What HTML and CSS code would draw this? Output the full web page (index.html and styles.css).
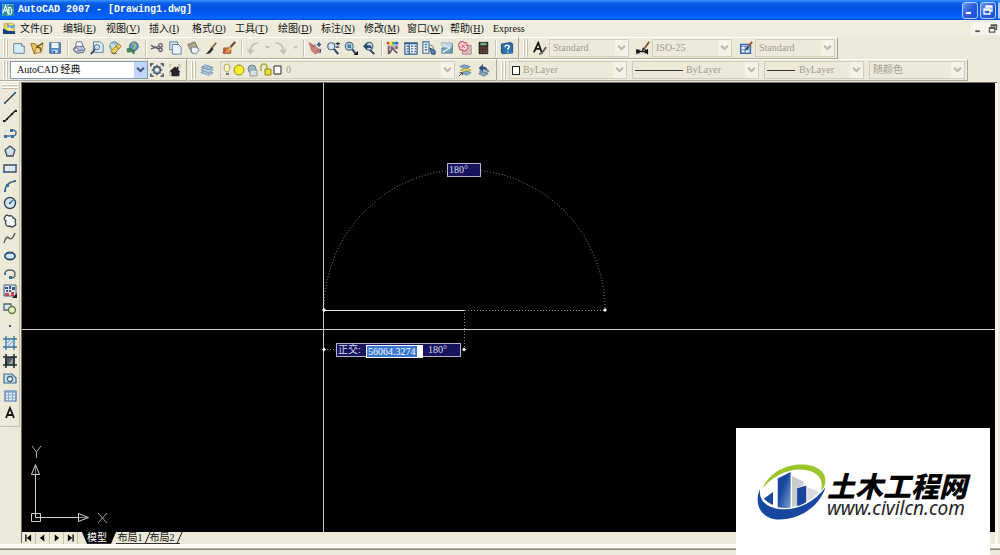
FILE: index.html
```html
<!DOCTYPE html>
<html lang="zh-CN">
<head>
<meta charset="utf-8">
<title>AutoCAD 2007 - [Drawing1.dwg]</title>
<link rel="stylesheet" href="styles.css">
</head>
<body>
<svg class="defs" aria-hidden="true">
  <symbol id="chev" viewBox="0 0 8 6"><path d="M1 1l3 3 3-3" fill="none" stroke="currentColor" stroke-width="1.8"/></symbol>
  <symbol id="restore" viewBox="0 0 10 10"><path d="M3 3V1h6v5H7M3 2h6" fill="none" stroke="currentColor" stroke-width="1.3"/><path d="M1 4h6v5H1zM1 5h6" fill="none" stroke="currentColor" stroke-width="1.3"/></symbol>
</svg>
<header class="titlebar">
  <svg class="app-icon" viewBox="0 0 14 14"><rect width="14" height="14" fill="#2f8d99"/><path d="M0 0h14M0 7h14M0 0v14M7 0v14" stroke="#8fd2d4"/><path d="M1 11L4 2l3 9M2 8h4M8 4v8h2q3-3 0-8z" fill="none" stroke="#fff" stroke-width="1.2"/></svg>
  <h1>AutoCAD 2007 - [Drawing1.dwg]</h1>
  <div class="win-buttons">
    <button aria-label="最小化"><svg viewBox="0 0 10 10"><path d="M1 8h5" stroke="#fff" stroke-width="2.2"/></svg></button>
    <button aria-label="还原"><svg><use href="#restore"/></svg></button>
    <button class="cut-off" aria-label="关闭"></button>
  </div>
</header>
<nav class="menubar">
  <svg class="doc-icon" viewBox="0 0 14 14"><path d="M1 2l8-1 3 2v9H2z" fill="#f5d54a" stroke="#a68a2c" stroke-width=".6"/><path d="M3 1l5 3 5-1v3L6 8z" fill="#6aa9e8"/><path d="M0 13V7l4 2 9 1v3z" fill="#173f86"/><path d="M4 9l3-4 4 5z" fill="#fff1a0"/></svg>
  <button>文件<span>(<u>F</u>)</span></button><button>编辑<span>(<u>E</u>)</span></button><button>视图<span>(<u>V</u>)</span></button><button>插入<span>(<u>I</u>)</span></button><button>格式<span>(<u>O</u>)</span></button><button>工具<span>(<u>T</u>)</span></button><button>绘图<span>(<u>D</u>)</span></button><button>标注<span>(<u>N</u>)</span></button><button>修改<span>(<u>M</u>)</span></button><button>窗口<span>(<u>W</u>)</span></button><button>帮助<span>(<u>H</u>)</span></button><button><span>Express</span></button>
  <div class="doc-buttons">
    <button aria-label="最小化文档"><svg viewBox="0 0 10 10"><path d="M2 8h5" stroke="currentColor" stroke-width="2"/></svg></button>
    <button aria-label="还原文档"><svg><use href="#restore"/></svg></button>
  </div>
</nav>
<div class="toolrow">
  <div class="toolbar" role="toolbar" aria-label="标准">
    <button aria-label="新建"><svg viewBox="0 0 16 16"><path d="M2 3h9l3 3v8H2z" fill="#d9ecf8" stroke="#4b7794"/><path d="M11 3v3h3" fill="#fff" stroke="#4b7794"/></svg></button>
    <button aria-label="打开"><svg viewBox="0 0 16 16"><path d="M1 3h5l1 2h5l-4 8-3 2z" fill="#e7c35b" stroke="#8b6b21"/><path d="M5 14l3-8 7-3-2 10z" fill="#f6df93" stroke="#8b6b21" stroke-width=".8"/><path d="M15 2l-7 5 4 1v4" fill="none" stroke="#795018" stroke-width="1.6"/></svg></button>
    <button aria-label="保存"><svg viewBox="0 0 16 16"><path d="M2 2h12v12H2z" fill="#5b8dc8" stroke="#24528f"/><path d="M4 2h8v6H4z" fill="#eef6fc"/><path d="M5 10h6v4H5z" fill="#c5daf0"/><path d="M6 11h2v3H6z" fill="#24528f"/></svg></button>
    <i class="sep"></i>
    <button aria-label="打印"><svg viewBox="0 0 16 16"><path d="M4 7l1-6h6l2 6" fill="#fff" stroke="#55647c"/><path d="M2 8l4-2h6l3 3-2 4-7 1-4-3z" fill="#b7c2dc" stroke="#4f5c7c"/><circle cx="5" cy="10" r="2" fill="#fff" stroke="#596786"/><path d="M8 11l5-1" stroke="#596786"/></svg></button>
    <button aria-label="打印预览"><svg viewBox="0 0 16 16"><path d="M4 1h8l3 3v9H4z" fill="#e3eff9" stroke="#4b7794"/><path d="M6 9l-5 6" stroke="#33476c" stroke-width="2"/><circle cx="8" cy="7" r="3" fill="#c7e2f4" stroke="#47617f"/></svg></button>
    <button aria-label="发布"><svg viewBox="0 0 16 16"><circle cx="7" cy="6" r="5" fill="#9cc7e5" stroke="#41739c"/><path d="M3 4l4 2-2 4" stroke="#e5ebad" fill="none" stroke-width="2"/><path d="M3 12l9-9 3 3-8 9z" fill="#f0d34f" stroke="#9b6824"/><path d="M9 6l3 3M4 14h6" stroke="#554ba0"/></svg></button>
    <button aria-label="三维 DWF"><svg viewBox="0 0 16 16"><circle cx="9" cy="6" r="5" fill="#6795bc" stroke="#345779"/><path d="M7 2l4 3-2 4" stroke="#94c26b" stroke-width="2" fill="none"/><path d="M1 9l4-1v2l5 1-1 4-3-3-4 1z" fill="#3e9156" stroke="#285b4f" stroke-width=".7"/></svg></button>
    <i class="sep"></i>
    <button aria-label="剪切"><svg viewBox="0 0 16 16"><path d="M1 5l9 4M1 9l9-3" stroke="#4d5868" stroke-width="1.4"/><circle cx="12" cy="5" r="2" fill="none" stroke="#66527a" stroke-width="1.5"/><circle cx="12" cy="10" r="2" fill="none" stroke="#66527a" stroke-width="1.5"/></svg></button>
    <button aria-label="复制"><svg viewBox="0 0 16 16"><path d="M2 1h9v9H2z" fill="#d5e7f6" stroke="#4b7794"/><path d="M5 4h7l3 3v8H5z" fill="#e8f3fb" stroke="#4b7794"/></svg></button>
    <button aria-label="粘贴"><svg viewBox="0 0 16 16"><path d="M2 4l8-3 4 8-7 5z" fill="#b9a987" stroke="#6d6653"/><path d="M4 3l4-2 1 2-4 2z" fill="#8c939a"/><path d="M6 7h6l3 3-4 5-5-2z" fill="#eaf2f6" stroke="#697e90"/></svg></button>
    <button aria-label="特性匹配"><svg viewBox="0 0 16 16"><path d="M14 2L8 9" stroke="#8c6238" stroke-width="2"/><path d="M9 7l2 2-4 5-5 1z" fill="#302b29"/></svg></button>
    <button aria-label="块编辑器"><svg viewBox="0 0 16 16"><path d="M2 8h8v6H2z" fill="#df9155" stroke="#7d4732"/><path d="M15 1l-7 8" stroke="#674234" stroke-width="2.5"/><path d="M9 6l3 3-5 2z" fill="#f0c757"/><path d="M1 14l4-5" stroke="#b84632" stroke-width="1.5"/></svg></button>
    <i class="sep"></i>
    <button aria-label="放弃" disabled><svg viewBox="0 0 16 16"><path d="M14 2Q5 3 5 13M2 9l3 5 4-4" fill="none" stroke="#c1bfb2" stroke-width="2"/></svg></button>
    <button class="narrow" aria-label="放弃列表" disabled><svg viewBox="0 0 6 4"><path d="M0 0h6L3 3z" fill="#bdbaae"/></svg></button>
    <button aria-label="重做" disabled><svg viewBox="0 0 16 16"><path d="M2 2q9 1 9 11M7 10l4 4 3-5" fill="none" stroke="#c1bfb2" stroke-width="2"/></svg></button>
    <button class="narrow" aria-label="重做列表" disabled><svg viewBox="0 0 6 4"><path d="M0 0h6L3 3z" fill="#bdbaae"/></svg></button>
    <i class="sep"></i>
    <button aria-label="实时平移"><svg viewBox="0 0 16 16"><path d="M1 2l3 1 2 2 2-1 1 3 4 2-1 4-4 2-4-4z" fill="#c9837c" stroke="#a86a66" stroke-width=".6"/><path d="M2 3l5 4M10 11l4 3" stroke="#a35251"/><path d="M10 4h5M12.500 1.500v5M14 9v4" stroke="#31557c" stroke-width="1.800"/></svg></button>
    <button aria-label="实时缩放"><svg viewBox="0 0 16 16"><path d="M9 9l5 6" stroke="#334a69" stroke-width="2.400"/><circle cx="6" cy="6" r="4" fill="#d5e8f4" stroke="#566e84" stroke-width="1.400"/><path d="M11 3h5M13.500 1v4M11 7h4" stroke="#213750" stroke-width="1.300"/></svg></button>
    <button aria-label="窗口缩放"><svg viewBox="0 0 16 16"><path d="M9 9l4 5" stroke="#334a69" stroke-width="2.400"/><circle cx="6" cy="6" r="4.500" fill="#bed7e8" stroke="#566e84" stroke-width="1.400"/><path d="M4 4h4v4H4z" fill="#477aa0"/><path d="M16 11v5h-5z" fill="#111"/></svg></button>
    <button aria-label="缩放上一个"><svg viewBox="0 0 16 16"><path d="M9 10l5 5" stroke="#334a69" stroke-width="2.400"/><circle cx="8" cy="6" r="4.500" fill="#c6d8e5" stroke="#566e84" stroke-width="1.400"/><path d="M1 6l5-4v3q6-1 5 4-2-2-5-1v2z" fill="#24446c"/></svg></button>
    <i class="sep"></i>
    <button aria-label="特性"><svg viewBox="0 0 16 16"><path d="M1 1h3v3H1z" fill="#e33b36"/><path d="M4 1h3v3H4z" fill="#f4ed29"/><path d="M7 1h3v3H7z" fill="#30ac45"/><path d="M10 1h4v3h-4z" fill="#415be3"/><path d="M2 5h12v4H2z" fill="#b6a4ac"/><path d="M3 6v9M6 7l7 7M12 6v3M7 9l-3 5" stroke="#735663" stroke-width="2"/></svg></button>
    <button aria-label="设计中心"><svg viewBox="0 0 16 16"><path d="M1 2h14v13H1z" fill="#eff5fa" stroke="#315e91" stroke-width="1.400"/><path d="M1 3h14" stroke="#315e91" stroke-width="1.500"/><path d="M6 4v11M8 6h2m2 0h2M8 9h2m2 0h2M8 12h2m2 0h2M3 6h2M3 9h2M3 12h2" stroke="#41658f" stroke-width="1.500"/></svg></button>
    <button aria-label="工具选项板"><svg viewBox="0 0 16 16"><path d="M1 1h7v13H1z" fill="#f4f8fc" stroke="#426c96" stroke-width="1.300"/><path d="M3 4h3M3 7h3M3 10h3" stroke="#48759c" stroke-width="1.500"/><path d="M9 5q4-1 4 5" fill="none" stroke="#4a6b8a"/><path d="M9 8l6 3v4h-4z" fill="#5c86b5" stroke="#233f69"/></svg></button>
    <button aria-label="图纸集管理器"><svg viewBox="0 0 16 16"><path d="M1 2h13v8H5z" fill="#b9d3e4" stroke="#8ea6b4" stroke-width=".7"/><path d="M2 8h12v6H2z" fill="#6fa3b6" stroke="#547a90" stroke-width=".7"/><path d="M3 4l8 4-8 5" fill="none" stroke="#e8f1f2" stroke-width="1.500"/><path d="M14 3v11" stroke="#557a8c"/></svg></button>
    <button aria-label="标记集管理器"><svg viewBox="0 0 16 16"><path d="M5 5h10v10H5z" fill="#d6c2c7" stroke="#a77783"/><path d="M2 2q3-3 5 0 4-1 3 3 3 3 0 5-3 3-5 0-4 1-3-3-3-2 0-5z" fill="#f8dce1" stroke="#d35d72" stroke-width="1.500"/><path d="M4 4l4 4M8 4L4 8" stroke="#cb3d55"/></svg></button>
    <button aria-label="快速计算器"><svg viewBox="0 0 16 16"><path d="M3 1h11v14H3z" fill="#2e2c29"/><path d="M5 2h7v3H5z" fill="#79ab7d"/><path d="M5 8h2m1 0h2m1 0h2M5 11h2m1 0h2m1 0h2M5 13h2m1 0h2m1 0h2" stroke="#c05c51"/></svg></button>
    <i class="sep"></i>
    <button aria-label="帮助"><svg viewBox="0 0 16 16"><path d="M1 3l11-2 3 2v11l-12 1-2-2z" fill="#255b91"/><path d="M3 4h11v10H3z" fill="#3371ad"/><path d="M6 7q0-3 3-2 3 1 0 4v1M9 12v1" stroke="#fff" stroke-width="1.700" fill="none"/></svg></button>
  </div>
  <div class="toolbar styles-bar" role="toolbar" aria-label="样式">
    <button aria-label="文字样式"><svg viewBox="0 0 16 16"><path d="M1 13L6 2l4 11M3 9h6" fill="none" stroke="#171717" stroke-width="2"/><path d="M15 7l-5 7-3 1" stroke="#59604f" stroke-width="2" fill="none"/></svg></button>
    <div class="combo w80"><select aria-label="文字样式列表" disabled><option>Standard</option></select><svg><use href="#chev"/></svg></div>
    <button aria-label="标注样式"><svg viewBox="0 0 16 16"><path d="M1 9v6M13 9v6M2 12h10M4 10l-3 2 3 2M10 10l3 2-3 2" stroke="#111" stroke-width="1.500" fill="none"/><path d="M15 1l-5 7" stroke="#8e4b2e" stroke-width="2"/><path d="M8 7l3 2-5 3z" fill="#2b2b35"/></svg></button>
    <div class="combo w80"><select aria-label="标注样式列表" disabled><option>ISO-25</option></select><svg><use href="#chev"/></svg></div>
    <button aria-label="表格样式"><svg viewBox="0 0 16 16"><path d="M2 4h11v10H2z" fill="#eef5ff" stroke="#3c67b4" stroke-width="1.800"/><path d="M2 6h11M2 10h11M7 6v8" stroke="#5380c5"/><path d="M15 1l-5 6" stroke="#a35332" stroke-width="2"/><path d="M9 6l3 2-6 4z" fill="#284b52"/></svg></button>
    <div class="combo w80"><select aria-label="表格样式列表" disabled><option>Standard</option></select><svg><use href="#chev"/></svg></div>
  </div>
</div>
<div class="toolrow">
  <div class="toolbar" role="toolbar" aria-label="工作空间">
    <div class="combo active w138"><select aria-label="工作空间"><option>AutoCAD 经典</option></select><svg><use href="#chev"/></svg></div>
    <button aria-label="工作空间设置"><svg viewBox="0 0 16 16"><path d="M1 4V1h3M12 1h3v3M15 12v3h-3M4 15H1v-3" fill="none" stroke="#26394c" stroke-width="1.500"/><circle cx="8" cy="8" r="4" fill="#b8cad7" stroke="#40566a" stroke-width="1.500"/><path d="M8 2v3M8 11v3M2 8h3M11 8h3M4 4l2 2M10 10l2 2M12 4l-2 2M6 10l-2 2" stroke="#40566a" stroke-width="1.500"/><circle cx="8" cy="8" r="1.500" fill="#fff"/></svg></button>
    <button aria-label="我的工作空间"><svg viewBox="0 0 16 16"><path d="M2 5V2h3M12 2h2v3M2 10v4h3" fill="none" stroke="#747367" stroke-dasharray="1 1"/><path d="M2 9l6-5 2 2V4h2v4l2 2-1 1v4H4v-4z" fill="#252525"/></svg></button>
  </div>
  <div class="toolbar layers-bar" role="toolbar" aria-label="图层">
    <button aria-label="图层特性管理器"><svg viewBox="0 0 16 16"><path d="M1 11l5-3 9 3-5 3z" fill="#a8c6dc" stroke="#597c98" stroke-width=".7"/><path d="M1 8l5-3 9 3-5 3z" fill="#c3d9e9" stroke="#597c98" stroke-width=".7"/><path d="M1 5l5-3 9 3-5 3z" fill="#96bad5" stroke="#597c98" stroke-width=".7"/></svg></button>
    <div class="combo layer w235"><select aria-label="图层" disabled><option>0</option></select>
      <svg class="layer-icons" viewBox="0 0 64 14"><path d="M3 4q0-3 3-3t3 3q0 2-2 5H5Q3 6 3 4z" fill="#fffcbf" stroke="#aaa36e"/><path d="M5 10h3v2H5z" fill="#777"/><circle cx="18" cy="7" r="5" fill="#ffed2b" stroke="#8f8a2c"/><circle cx="31" cy="6" r="4" fill="#9eb6bb" stroke="#718b91"/><path d="M29 7h7v6h-7z" fill="#d8e1df" stroke="#8d9c9d"/><path d="M40 8V4q0-3 3-3t3 3v3" fill="none" stroke="#b0a838" stroke-width="1.500"/><path d="M44 6h6v6h-6z" fill="#e4dc39" stroke="#918820"/><path d="M53 3h7v8h-7z" fill="#fff" stroke="#222"/></svg>
      <svg><use href="#chev"/></svg></div>
    <button aria-label="将对象的图层置为当前"><svg viewBox="0 0 16 16"><path d="M2 4l5-2 7 2-5 3z" fill="#79a5cb" stroke="#496f91" stroke-width=".7"/><path d="M3 8l5-2 7 2-6 3z" fill="#eadb53" stroke="#888044" stroke-width=".7"/><path d="M5 12l4-3 6 2-5 3z" fill="#80abcf" stroke="#496f91" stroke-width=".7"/><path d="M1 15l4-4M2 11h3v3" stroke="#333" fill="none"/></svg></button>
    <button aria-label="上一个图层"><svg viewBox="0 0 16 16"><path d="M4 9l4-2 7 2-5 3z" fill="#a9c4d7" stroke="#5b7b90"/><path d="M3 12l4-2 7 2-5 3z" fill="#86a8c1" stroke="#5b7b90"/><path d="M3 6l5-5v3q6 1 5 5-2-3-5-2v3z" fill="#315078"/></svg></button>
  </div>
  <div class="toolbar props" role="toolbar" aria-label="特性">
    <div class="combo swatch w118"><select aria-label="颜色" disabled><option>ByLayer</option></select><i class="box"></i><svg><use href="#chev"/></svg></div>
    <div class="combo ltype w127"><select aria-label="线型" disabled><option>ByLayer</option></select><i class="line"></i><svg><use href="#chev"/></svg></div>
    <div class="combo lweight w100"><select aria-label="线宽" disabled><option>ByLayer</option></select><i class="line"></i><svg><use href="#chev"/></svg></div>
    <div class="combo pstyle w96"><select aria-label="打印样式" disabled><option>随颜色</option></select><svg><use href="#chev"/></svg></div>
  </div>
</div>
<main class="workspace">
  <aside class="draw" role="toolbar" aria-label="绘图">
    <button aria-label="直线"><svg viewBox="0 0 14 14"><path d="M2 12L12 2" stroke="#333" stroke-width="1.300"/><path d="M1 11h2v2H1zM11 1h2v2h-2z" fill="#2c73ad"/></svg></button>
    <button aria-label="构造线"><svg viewBox="0 0 14 14"><path d="M1 13L13 1" stroke="#222" stroke-width="1.600"/><path d="M3 9h2v2H3zM8 4h2v2H8zM12 1h2v2h-2zM0 11h2v2H0z" fill="#222"/></svg></button>
    <button aria-label="多段线"><svg viewBox="0 0 14 14"><path d="M1 10h8q4 0 4-3t-4-3" fill="none" stroke="#566f84" stroke-width="1.500"/><path d="M1 9h3v3H1zM8 9h3v3H8zM7 3h3v3H7z" fill="#2c73ad"/></svg></button>
    <button aria-label="正多边形"><svg viewBox="0 0 14 14"><path d="M7 2l5 4-2 6H4L2 6z" fill="#cddfe9" stroke="#3f4f5e" stroke-width="1.300"/></svg></button>
    <button aria-label="矩形"><svg viewBox="0 0 14 14"><path d="M1 4h12v7H1z" fill="#dce9f0" stroke="#394c61" stroke-width="1.400"/><path d="M12 3h2v2h-2zM0 10h2v2H0z" fill="#2c73ad"/></svg></button>
    <button aria-label="圆弧"><svg viewBox="0 0 14 14"><path d="M2 13Q2 3 13 2" fill="none" stroke="#4b5965" stroke-width="1.400"/><path d="M1 11h2v2H1zM3 5h3v3H3zM11 1h2v2h-2z" fill="#2c73ad"/></svg></button>
    <button aria-label="圆"><svg viewBox="0 0 14 14"><circle cx="7" cy="7" r="5.500" fill="#d5e5ef" stroke="#364656" stroke-width="1.400"/><path d="M7 7l3-3" stroke="#2c73ad" stroke-width="1.500"/><path d="M6 6h2v2H6z" fill="#2c73ad"/></svg></button>
    <button aria-label="修订云线"><svg viewBox="0 0 14 14"><path d="M3 7Q0 5 2 3 3 0 6 2q4-1 4 2 4 1 2 4 2 3-1 4-2 2-4 0-4 1-4-2-1-2 0-3z" fill="#f6f8f6" stroke="#40484e" stroke-width="1.300"/></svg></button>
    <button aria-label="样条曲线"><svg viewBox="0 0 14 14"><path d="M1 12Q3 4 6 7t6-5" fill="none" stroke="#555" stroke-width="1.400"/></svg></button>
    <button aria-label="椭圆"><svg viewBox="0 0 14 14"><ellipse cx="7" cy="7" rx="5" ry="3.500" fill="#d6e7ef" stroke="#2d5271" stroke-width="1.800"/><path d="M1 6h2v2H1zM12 6h1v2h-1zM6 3h2v2H6z" fill="#2c73ad"/></svg></button>
    <button aria-label="椭圆弧"><svg viewBox="0 0 14 14"><path d="M2 8q0-4 5-4t5 4-4 4" fill="none" stroke="#5b646b" stroke-width="1.500"/><path d="M1 7h2v2H1zM6 10h3v3H6z" fill="#2c73ad"/></svg></button>
    <button aria-label="插入块"><svg viewBox="0 0 14 14"><path d="M1 1h12v11H1z" fill="#dfe6ea" stroke="#405d7b"/><path d="M2 3h3v2H2zM6 2h2v3H6zM6 6h2v2H6zM9 3h3v3H9zM3 6h2v2H3z" fill="#355a85"/><path d="M2 9h4v3H2zM8 8h3v4H8z" fill="#c8475a"/><path d="M14 9v5H9z" fill="#222"/></svg></button>
    <button aria-label="创建块"><svg viewBox="0 0 14 14"><path d="M1 3h7v6H1z" fill="#dce9f0" stroke="#4e656e" stroke-width="1.300"/><circle cx="9" cy="9" r="3.500" fill="#e2ecc8" stroke="#697737" stroke-width="1.400"/></svg></button>
    <button aria-label="点"><svg viewBox="0 0 14 14"><path d="M6 6h2v2H6z" fill="#345b78"/></svg></button>
    <button aria-label="图案填充"><svg viewBox="0 0 14 14"><path d="M2 3h10v8H2z" fill="#d3e5f0"/><path d="M0 3h14M0 11h14M3 0v14M11 0v14" stroke="#397198" stroke-width="1.300"/><path d="M3 8l5-5M4 11l7-7M8 11l3-3" stroke="#7fabc8"/></svg></button>
    <button aria-label="渐变色"><svg viewBox="0 0 14 14"><path d="M2 3h10v8H2z" fill="#555c60"/><path d="M0 3h14M0 11h14M3 0v14M11 0v14" stroke="#1c2c36" stroke-width="1.500"/><path d="M5 10l5-6v6z" fill="#969b98"/></svg></button>
    <button aria-label="面域"><svg viewBox="0 0 14 14"><path d="M1 3h8l4 4v5H1z" fill="#c5ddea" stroke="#3f6b8a" stroke-width="1.200"/><circle cx="7" cy="8" r="2.500" fill="#fff" stroke="#3f6b8a" stroke-width="1.300"/></svg></button>
    <button aria-label="表格"><svg viewBox="0 0 14 14"><path d="M2 2h11v10H2z" fill="#e7eff8" stroke="#4771a6" stroke-width="1.200"/><path d="M2 3h11" stroke="#7fa0cf" stroke-width="1.500"/><path d="M2 6h11M2 9h11M5.500 3v9M9.500 3v9" stroke="#84a5ce"/></svg></button>
    <button aria-label="多行文字"><svg viewBox="0 0 14 14"><path d="M3 12L7 2l4 10M4 9h6" fill="none" stroke="#151515" stroke-width="1.800"/></svg></button>
  </aside>
  <section class="document">
    <div class="canvas">
      <svg class="drawing">
        <path d="M301.500 0V449" stroke="#c9c9c9"/>
        <path d="M0 246.500H1973" stroke="#d6d6d6"/>
        <path d="M302 227.500H443" stroke="#e9e9e9"/>
        <path d="M302 227A140.500 140.500 0 0 1 583 227M443 227.500H583M442.500 227V267M302 266.500H314M438 266.500H443" fill="none" stroke="#8c8c8c" stroke-dasharray="1 2"/>
        <path d="M583 225l2 2-2 2-2-2zM442 264.500l2 2-2 2-2-2zM302 225l2 2-2 2-2-2zM302 264.500l2 2-2 2-2-2z" fill="#fff"/>
        <g fill="none" stroke="#d0d0d0"><path d="M9.500 430.500h9v8h-9zM13.500 434.500V392M13.500 434.500H56M13.500 381.500l4 10h-8zM66.500 434.500l-10 4v-8z"/><path d="M10 363l4.500 6 4.500-6M14.500 369v6M76 430l9 10M85 430l-9 10" stroke="#aaa"/><path d="M13.500 383v8M57 434.500h8" stroke="#888"/></g>
      </svg>
      <output class="tip angle">180°</output>
      <div class="tip ortho"><label for="dist">正交:</label><input id="dist" value="56064.3274"><span>180°</span></div>
    </div>
    <footer class="tabs">
      <div class="steps">
        <button aria-label="第一个"><svg viewBox="0 0 8 8"><path d="M1 0v8" stroke="#000" stroke-width="1.500"/><path d="M7 0v8L2 4z"/></svg></button>
        <button aria-label="上一个"><svg viewBox="0 0 8 8"><path d="M6 0v8L1 4z"/></svg></button>
        <button aria-label="下一个"><svg viewBox="0 0 8 8"><path d="M2 0v8l5-4z"/></svg></button>
        <button aria-label="最后一个"><svg viewBox="0 0 8 8"><path d="M1 0v8l5-4z"/><path d="M7 0v8" stroke="#000" stroke-width="1.500"/></svg></button>
      </div>
      <button class="tab current">模型</button><button class="tab">布局1</button><button class="tab">布局2</button>
    </footer>
  </section>
</main>
<div class="dock"></div>
<div class="brand">
  <svg viewBox="85 127 206 170">
    <defs><linearGradient id="tower" x1="0" y1="0" x2="1" y2="1"><stop offset=".4" stop-color="#17479e"/><stop offset="1" stop-color="#7fa0d4"/></linearGradient></defs>
    <path d="M188 165l34 17v10l-19 8v52l-15 4z" fill="#c9cbce"/><path d="M233 198l33 12q-12 19-33 30z" fill="#d8dadd"/>
    <path d="M105 232l27-20v38q-16-6-27-18z" fill="#17479e"/><path d="M146 172l38-19v105q-20 3-38-1z" fill="url(#tower)"/><path d="M203 201l27-8v49q-13 8-27 11z" fill="#17479e"/>
    <path d="M102 200C120 158 165 131 215 131c47 0 74 22 71 52q-2 16-12 25c6-25-2-44-28-56-46-17-104 2-144 48z" fill="#9ac52c"/>
    <path d="M94 203c-20 45 4 90 56 90 62 0 118-38 137-96-30 42-76 65-122 66-46 0-76-22-71-60z" fill="#17479e"/>
  </svg>
  <p><strong>土木工程网</strong><em>www.civilcn.com</em></p>
</div>
</body>
</html>
```
FILE: styles.css
```css
* { box-sizing: border-box; }
body {
  margin: 0; height: 100vh; display: flex; flex-direction: column; overflow: hidden; position: relative;
  background: #ece9d8; color: #111;
  font: 10px/12px "Liberation Serif", "Noto Sans CJK SC", serif;
}
button { border: 0; padding: 0; margin: 0; background: none; font: inherit; color: inherit; }
svg { display: block; }
.defs { position: absolute; width: 0; height: 0; }

.titlebar {
  height: 20px; flex: none; display: flex; align-items: center; padding-left: 2px; overflow: hidden;
  background: linear-gradient(#3b95ff, #0a5fe8 3px, #0054e0 8px, #0460f8 15px, #0167ff 18px, #0148c8);
}
.app-icon { width: 12px; height: 12px; margin-right: 4px; }
h1 { margin: 0; flex: 1; font: bold 10px/12px "Liberation Mono", monospace; color: #fff; white-space: pre; }
.win-buttons { display: flex; gap: 2px; }
.win-buttons button {
  width: 16px; height: 17px; padding: 2px; border: 1px solid #b8ccf8; border-radius: 3px;
  background: linear-gradient(135deg, #6c9cf4, #2a5cdc 50%, #1c4fd0);  color: #fff;
}
.win-buttons svg { width: 10px; height: 10px; }
.win-buttons .cut-off { width: 1px; padding: 0; }

.menubar { height: 17px; flex: none; display: flex; align-items: center; padding-left: 3px; background: #efecde; }
.doc-icon { width: 13px; height: 13px; margin-right: 4px; }
.menubar > button { width: 43px; text-align: left; white-space: nowrap; }
.doc-buttons { margin-left: auto; display: flex; gap: 1px; }
.doc-buttons button { width: 14px; height: 13px; padding: 2px; background: #f6f4ec; color: #555; }
.doc-buttons svg { width: 10px; height: 9px; }

.toolrow { display: flex; flex: none; gap: 1px; height: 22px; }
.toolbar {
  display: flex; align-items: center; padding: 0 2px 0 10px;
  border: 1px solid; border-color: #fff #aca899 #aca899 #f6f4ec; border-left: 0;
  background:
    linear-gradient(#c4c0b0, #c4c0b0) 4px 1px / 1px 18px no-repeat,
    linear-gradient(#fff, #fff) 3px 1px / 1px 18px no-repeat,
    linear-gradient(#c4c0b0, #c4c0b0) 7px 1px / 1px 18px no-repeat,
    linear-gradient(#fff, #fff) 6px 1px / 1px 18px no-repeat;
}
.toolbar button { width: 18px; display: flex; justify-content: center; }
.toolbar button svg { width: 14px; height: 14px; }
.toolbar .narrow { width: 10px; }
.toolbar .narrow svg { width: 5px; height: 4px; }
.sep { width: 6px; height: 17px; background: linear-gradient(90deg, transparent 3px, #c9c5b5 3px, #c9c5b5 4px, #fff 4px, #fff 5px, transparent 5px); }

.combo { position: relative; height: 18px; color: #b9b5a6; }
.combo select {
  appearance: none; width: 100%; height: 100%; padding: 0 16px 0 3px; border: 1px solid #d2cebe; border-radius: 0;
  background: #ece9d8; color: #a09c8c; opacity: 1; font: 10px/12px "Liberation Serif", "Noto Sans CJK SC", serif;
}
.combo > svg:last-child { position: absolute; right: 1px; top: 1px; width: 13px; height: 16px; padding: 4px 2px; background: #f3f1e8; pointer-events: none; }
.combo.active select { background: #fff; color: #111; border-color: #7f9db9; padding-left: 6px; }
.combo.active > svg:last-child { background: #c4d5fc; color: #3f587f; }
.w80 { width: 80px; } .w96 { width: 96px; } .w100 { width: 100px; } .w118 { width: 118px; }
.w127 { width: 127px; } .w138 { width: 138px; } .w235 { width: 235px; }
.styles-bar { padding-left: 11px; }
.styles-bar .combo + button { margin-left: 5px; }
.layers-bar { padding-right: 4px; }
.layers-bar .combo { margin: 0 1px 0 4px; }
.props { gap: 5px; padding-left: 11px; }
.combo.layer select { padding-left: 65px; }
.layer-icons { position: absolute; left: 1px; top: 2px; width: 64px; height: 14px; }
.swatch select { padding-left: 13px; }
.box { position: absolute; left: 3px; top: 5px; width: 8px; height: 9px; border: 1px solid #222; background: #fff; }
.line { position: absolute; left: 3px; top: 9px; width: 48px; height: 1px; background: #333; }
.ltype select { padding-left: 53px; }
.lweight select { padding-left: 34px; }
.lweight .line { width: 28px; }

.workspace { flex: 1; min-height: 0; display: flex; align-items: flex-start; gap: 2px; padding-right: 2px; }
.draw {
  width: 20px; height: 346px; flex: none; display: flex; flex-direction: column; justify-content: space-between; align-items: center;
  padding: 9px 1px 6px 0; border: 1px solid; border-color: #fff #c4c0b0 #c4c0b0 #ece9d8;
  background: linear-gradient(#fff, #fff) 1px 2px / 16px 1px no-repeat, linear-gradient(#c4c0b0, #c4c0b0) 1px 3px / 16px 1px no-repeat,
    linear-gradient(#fff, #fff) 1px 5px / 16px 1px no-repeat, linear-gradient(#c4c0b0, #c4c0b0) 1px 6px / 16px 1px no-repeat;
}
.draw svg { width: 14px; height: 14px; }
.document { flex: 1; align-self: stretch; display: flex; flex-direction: column; margin-top: 2px; border-right: 3px solid #f8f7f1; box-shadow: -1px -1px #716f64; }
.canvas { position: relative; flex: 1; background: #000; overflow: hidden; }
.drawing { position: absolute; left: 0; top: 0; width: 100%; height: 100%; }
.tip { position: absolute; height: 14px; border: 1px solid #b4b4d6; background: #17135c; color: #dcdcf2; padding-left: 1px; }
.angle { left: 425px; top: 80px; width: 34px; }
.ortho { left: 314px; top: 260px; width: 125px; display: flex; }
.ortho label { width: 28px; white-space: nowrap; }
.ortho input {
  width: 57px; height: 13px; margin: 1px 5px 0 0; padding: 0 1px; border: 1px solid #fff; color: #fff;
  font: 10px/11px "Liberation Serif", serif; background: linear-gradient(90deg, #3a78d0 50px, #fff 50px);
}

.tabs { height: 12px; flex: none; display: flex; background: #ece9d8; }
.steps { display: flex; width: 60px; }
.steps button { width: 14px; height: 12px; display: flex; align-items: center; justify-content: center; border-right: 1px solid #c4c0b0; }
.steps svg { width: 7px; height: 8px; }
.tab { position: relative; width: 32px; height: 12px; padding-right: 4px; border-bottom: 1px solid #333; line-height: 11px; white-space: nowrap; }
.tab::after { content: ""; position: absolute; right: 0; top: 0; width: 1px; height: 12px; background: #111; transform: skewX(-24deg); }
.tab.current { width: 34px; background: #000; color: #fff; clip-path: polygon(0 0, 100% 0, 85% 100%, 15% 100%); padding: 0 4px 0 0; }
.dock { height: 11px; flex: none; background: linear-gradient(#fbfaf5 4px, #dedbcb 4px, #8d8a7c 5px, #8d8a7c 6px, #ece9d8 6px); }

.brand { position: absolute; right: 10px; bottom: 0; width: 254px; height: 127px; display: flex; align-items: center; padding-left: 21px; background: #fff; }
.brand svg { width: 70px; height: 58px; }
.brand p { margin: 4px 0 0; display: flex; flex-direction: column; font-style: italic; white-space: nowrap; }
.brand strong { font: italic 900 28px/28px "Noto Sans CJK SC", sans-serif; color: #000; }
.brand em { font: italic 19px/18px "Noto Sans", "Open Sans", sans-serif; color: #222; }
```
